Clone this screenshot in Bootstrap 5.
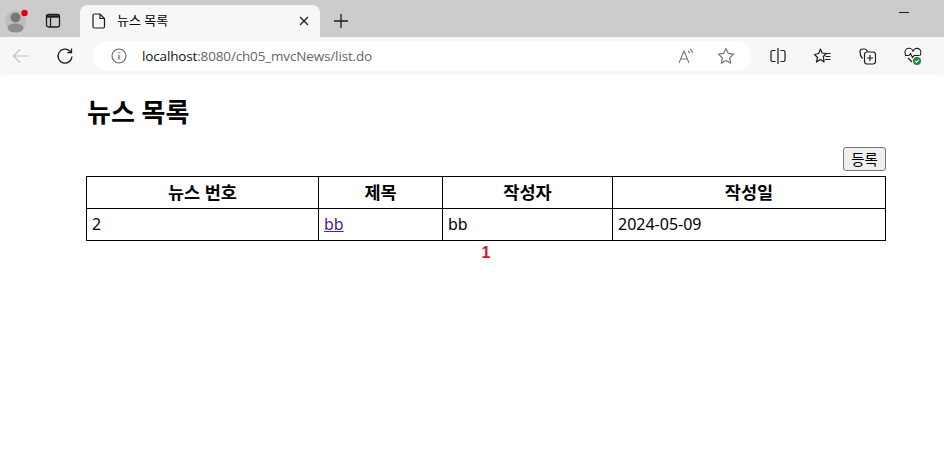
<!DOCTYPE html>
<html lang="ko">
<head>
  <meta charset="UTF-8">
  <meta name="viewport" content="width=device-width, initial-scale=1.0">
  <title>뉴스 목록</title>
  <link href="https://cdn.jsdelivr.net/npm/bootstrap@5.3.0/dist/css/bootstrap.min.css" rel="stylesheet">
  <style>
    body {
      background-color: #f7f7f7;
      color: #000;
      font-family: "Noto Sans", "Noto Sans CJK KR", sans-serif;
      overflow: hidden;
    }
    svg { display: block; flex: none; }
    .tab-strip {
      height: 37px;
      background-color: #cccccc;
    }
    .avatar-wrap { width: 30px; margin-left: 1px; }
    .layout-btn { margin-left: 14px; }
    .tab-active {
      width: 240px;
      height: 32px;
      margin-top: 5px;
      margin-left: 19px;
      padding: 0 8px 0 12px;
      background-color: #f7f7f7;
      border-radius: 8px 8px 0 0;
      font-size: 13px;
    }
    .tab-title { margin-left: 11px; padding-bottom: 2px; line-height: 1; }
    .new-tab { margin-left: 13px; }
    .min-btn { width: 10px; height: 1px; background-color: #222; margin: 12px 35px 0 auto; }
    .tool-bar {
      height: 38px;
      background-color: #f7f7f7;
      padding: 1px 0 1px 12px;
    }
    .reload-btn { margin-left: 26px; }
    .url-box {
      width: 658px;
      height: 30px;
      margin-left: 19px;
      padding: 0 16px 0 18px;
      background-color: #fff;
      border-radius: 15px;
      font-family: "Open Sans", "Noto Sans", sans-serif;
      font-size: 13.5px;
      letter-spacing: -0.15px;
    }
    .url-text { margin-left: 15px; color: #666; }
    .url-text b { font-weight: 400; color: #111; }
    .url-icons { gap: 23px; margin-left: auto; }
    .side-icons { gap: 28px; margin-left: 19px; }
    .news-page {
      height: 394px;
      padding: 22px 58px 0 86px;
      background-color: #fff;
      border-radius: 4px 4px 0 0;
    }
    .news-title {
      font-size: 26px;
      font-weight: 700;
      line-height: 30px;
      margin: 0 0 20px 1px;
    }
    .add-btn {
      font-size: 14.5px;
      line-height: 18px;
      height: 24px;
      width: 43px;
      padding: 0;
      color: #000;
      background-color: #efefef;
      border: 1px solid #767676;
      border-radius: 3px;
    }
    .news-table {
      width: 799px;
      margin: 5px 0 0;
      border-collapse: collapse;
      table-layout: fixed;
      font-size: 16px;
    }
    .news-table th, .news-table td {
      height: 32px;
      padding: 0 5px;
      border: 1px solid #000;
      line-height: 1.2;
      vertical-align: middle;
    }
    .news-table th { text-align: center; font-weight: 700; font-size: 17.5px; }
    .news-table a { color: #551a8b; }
    .paging-row {
      color: #e3111b;
      font-family: "Liberation Sans", sans-serif;
      font-size: 16px;
      font-weight: 700;
      line-height: 22px;
      width: 800px;
      margin-top: 1px;
    }
  </style>
</head>
<body>

<div class="tab-strip d-flex align-items-start">
  <div class="avatar-wrap mt-2">
    <svg width="30" height="26" viewBox="0 0 30 26">
      <circle cx="14.500" cy="13" r="10.500" fill="#bdbdbd"/>
      <circle cx="14.500" cy="9.500" r="5" fill="#7a7876"/>
      <ellipse cx="14.500" cy="20" rx="8" ry="4.500" fill="#8f8d8b"/>
      <circle cx="23.500" cy="5" r="3.200" fill="#e3000f"/>
    </svg>
  </div>
  <svg class="layout-btn mt-2" width="16" height="24" viewBox="0 0 16 24" fill="none" stroke="#1c1c1c" stroke-width="1.300">
    <rect x="1.500" y="6.500" width="13" height="12.500" rx="2"/>
    <path d="M1.500 8.500h13" stroke-width="2.400"/>
    <path d="M5.500 9.500V19"/>
  </svg>
  <div class="tab-active d-flex align-items-center">
    <svg width="14" height="16" viewBox="0 0 14 16" fill="none" stroke="#1c1c1c" stroke-width="1.200">
      <path d="M2.500 1h5.500l4.500 4.500v8a1.500 1.500 0 0 1-1.500 1.500h-8.500A1.500 1.500 0 0 1 1 13.500v-11A1.500 1.500 0 0 1 2.500 1z"/>
      <path d="M8 1v4.500h4.500"/>
    </svg>
    <span class="tab-title">뉴스 목록</span>
    <svg class="ms-auto" width="16" height="16" viewBox="0 0 16 16" stroke="#1c1c1c" stroke-width="1.300">
      <path d="M4 4l8 8M12 4l-8 8"/>
    </svg>
  </div>
  <svg class="new-tab mt-2" width="16" height="24" viewBox="0 0 16 24" stroke="#1c1c1c" stroke-width="1.300">
    <path d="M1 13h14M8 6v14"/>
  </svg>
  <div class="min-btn"></div>
</div>

<div class="tool-bar d-flex align-items-center">
  <svg width="18" height="16" viewBox="0 0 18 16" fill="none" stroke="#c4c4c4" stroke-width="1.200">
    <path d="M17 8H1.500M8 1.500L1.500 8 8 14.500"/>
  </svg>
  <svg class="reload-btn" width="18" height="18" viewBox="0 0 18 18" fill="none" stroke="#1c1c1c" stroke-width="1.300">
    <path d="M16 9.500a7 7 0 1 1-2-5.300l1.500 1.500"/>
    <path d="M15.500 1.500v4.200h-4.200"/>
  </svg>
  <div class="url-box d-flex align-items-center">
    <svg width="16" height="16" viewBox="0 0 16 16" fill="none" stroke="#666" stroke-width="1.100">
      <circle cx="8" cy="8" r="7"/>
      <path d="M8 7v4.500" stroke-width="1.300"/>
      <path d="M8 4.300v1.200" stroke-width="1.300"/>
    </svg>
    <span class="url-text"><b>localhost</b>:8080/ch05_mvcNews/list.do</span>
    <div class="url-icons d-flex align-items-center">
      <svg width="16" height="16" viewBox="0 0 16 16" fill="none" stroke="#777" stroke-width="1.100">
        <path d="M1 15L6 3l5 12M2.800 11h6.400"/>
        <path d="M10 3c.8.500 1.300 1.200 1.600 2.200M12 1c1.400.9 2.300 2.300 2.600 4"/>
      </svg>
      <svg width="18" height="18" viewBox="0 0 18 18" fill="none" stroke="#777" stroke-width="1.200" stroke-linejoin="round">
        <path d="M9 1.500l2.300 4.900 5.300.7-3.900 3.700 1 5.300L9 13.500l-4.700 2.600 1-5.300L1.400 7.100l5.300-.7z"/>
      </svg>
    </div>
  </div>
  <div class="side-icons d-flex align-items-center">
    <svg width="16" height="18" viewBox="0 0 16 18" fill="none" stroke="#1c1c1c" stroke-width="1.200">
      <path d="M5.500 3.500H2.500A1.500 1.500 0 0 0 1 5v8a1.500 1.500 0 0 0 1.500 1.500h3M10.500 3.500h3A1.500 1.500 0 0 1 15 5v8a1.500 1.500 0 0 1-1.500 1.500h-3M8 1v16"/>
    </svg>
    <svg width="17" height="18" viewBox="0 0 17 18" fill="none" stroke="#1c1c1c" stroke-width="1.200" stroke-linejoin="round">
      <path d="M6.500 2l1.600 4 4.200.5-3 3 .8 5.500-3.600-2.500-4 2.500 1-4.500-3-3 4.200-1z"/>
      <path d="M11.500 6.500h5M11.500 9.500h5M11 12.500h5.500"/>
    </svg>
    <svg width="17" height="18" viewBox="0 0 17 18" fill="none" stroke="#1c1c1c" stroke-width="1.200">
      <path d="M8.500 4.500c-.5-1.300-1.500-2.500-3-2.500h-2A2.500 2.500 0 0 0 1 4.500c0 2.500.7 5 2.500 7"/>
      <rect x="5.500" y="5" width="11" height="12" rx="2.500"/>
      <path d="M11 8v6M8 11h6"/>
    </svg>
    <svg width="18" height="18" viewBox="0 0 18 18" fill="none" stroke="#1c1c1c" stroke-width="1.100">
      <path d="M2.500 9C1.300 7.800 1 6.800 1 5.800a3.800 3.800 0 0 1 8-1 3.800 3.800 0 0 1 7.800 1c0 1-.3 2-1 3"/>
      <path d="M1 8.500h4l1.500-2 2 4 1.500-2h5.500"/>
      <path d="M4 11l4 4"/>
      <circle cx="13" cy="14" r="4" fill="#1e8a3c" stroke="none"/>
      <path d="M11.200 14l1.300 1.300 2.300-2.500" stroke="#fff"/>
    </svg>
  </div>
</div>

<div class="news-page">
  <h1 class="news-title">뉴스 목록</h1>
  <div class="d-flex justify-content-end">
    <button type="button" class="add-btn">등록</button>
  </div>
  <table class="news-table">
    <colgroup>
      <col style="width: 232px">
      <col style="width: 124px">
      <col style="width: 170px">
      <col style="width: 273px">
    </colgroup>
    <tr>
      <th>뉴스 번호</th>
      <th>제목</th>
      <th>작성자</th>
      <th>작성일</th>
    </tr>
    <tr>
      <td>2</td>
      <td><a href="#">bb</a></td>
      <td>bb</td>
      <td>2024-05-09</td>
    </tr>
  </table>
  <div class="paging-row text-center">1</div>
</div>

</body>
</html>
